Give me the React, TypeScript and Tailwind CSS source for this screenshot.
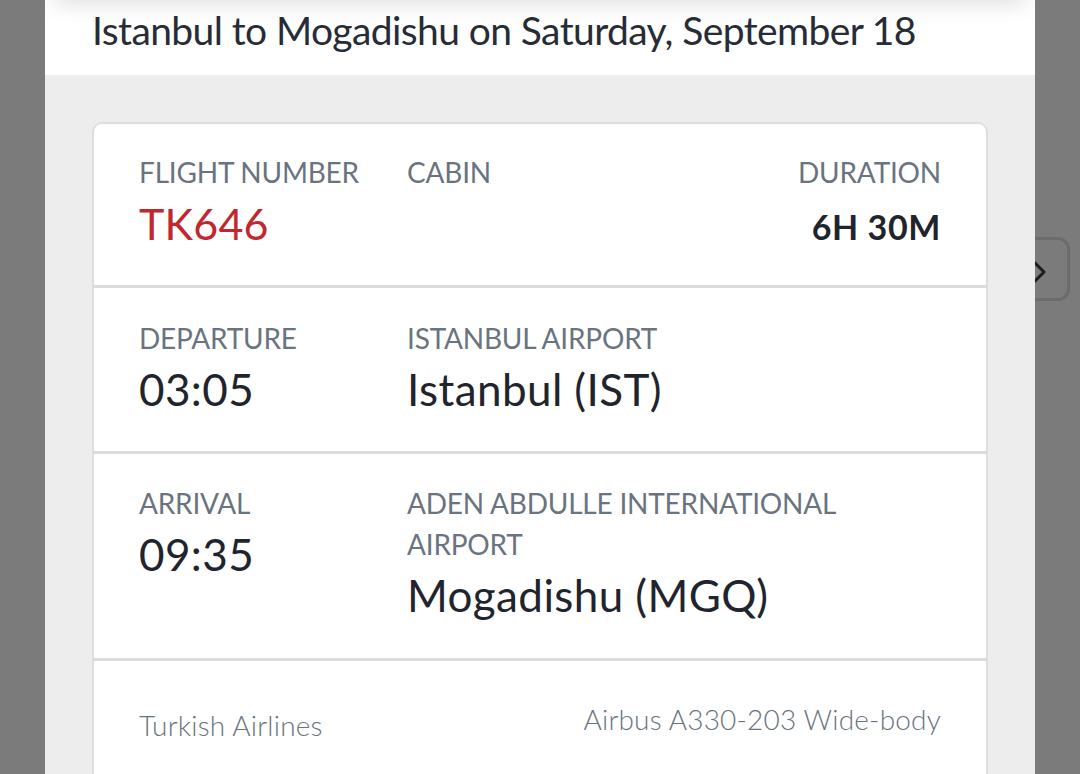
import React from "react";

const font = { fontFamily: "Lato, 'Noto Sans', sans-serif" };

function Label({ children }: { children: React.ReactNode }) {
  return <p className="text-[28px] leading-[41px] tracking-[-0.2px] uppercase text-[#6a7380]">{children}</p>;
}

export default function App() {
  return (
    <div className="relative h-[774px] w-[1080px] overflow-hidden bg-[#7b7b7b]" style={font}>
      {/* next arrow behind the sheet */}
      <div className="absolute left-[1000px] top-[237px] flex h-[64px] w-[70px] items-center justify-end rounded-xl border-[3px] border-[#6c6c6c] pr-[20px] pt-[6px]">
        <svg width="16" height="26" viewBox="0 0 16 26" fill="none">
          <polyline points="3,3 13,13 3,23" stroke="#1d1d1f" strokeWidth="3" strokeLinecap="round" strokeLinejoin="round" />
        </svg>
      </div>

      <div className="relative z-10 ml-[45px] h-full w-[990px] bg-[#ededed]">
        {/* header */}
        <div className="relative h-[75px] overflow-hidden bg-white px-[47px] pt-[6px]">
          <div className="absolute -top-[20px] left-[10px] right-[10px] h-[20px] bg-white shadow-[0_2px_22px_rgba(0,0,0,0.16)]" />
          <h1 className="text-[39px] leading-[48px] tracking-[-0.6px] text-[#272c36]">
            Istanbul to Mogadishu on Saturday, September 18
          </h1>
        </div>

        {/* body */}
        <div className="px-[47px] pt-[47px]">
          <div className="overflow-hidden rounded-[10px] border-2 border-[#dedede] bg-white">
            {/* flight */}
            <div className="flex border-b-[3px] border-[#dcdcdc] pb-[32px] pl-[45px] pr-[45px] pt-[28px]">
              <div className="w-[268px]">
                <Label>Flight Number</Label>
                <p className="mt-[5px] text-[43px] leading-[52px] tracking-[0.2px] text-[#c1282e]">TK646</p>
              </div>
              <div className="flex-1">
                <Label>Cabin</Label>
              </div>
              <div className="text-right">
                <Label>Duration</Label>
                <p className="mt-[8px] text-[34px] font-bold leading-[52px] tracking-[0.6px] text-[#1f242d]">6H 30M</p>
              </div>
            </div>

            {/* departure */}
            <div className="flex border-b-[3px] border-[#dcdcdc] pb-[36px] pl-[45px] pr-[45px] pt-[30px]">
              <div className="w-[268px]">
                <Label>Departure</Label>
                <p className="mt-1 text-[44px] leading-[52px] tracking-[0.4px] text-[#1f242d]">03:05</p>
              </div>
              <div className="flex-1">
                <Label>Istanbul Airport</Label>
                <p className="mt-1 text-[44px] leading-[52px] tracking-[0.4px] text-[#1f242d]">Istanbul (IST)</p>
              </div>
            </div>

            {/* arrival */}
            <div className="flex border-b-[3px] border-[#dcdcdc] pb-[37px] pl-[45px] pr-[45px] pt-[29px]">
              <div className="w-[268px]">
                <Label>Arrival</Label>
                <p className="mt-1 text-[44px] leading-[52px] tracking-[0.4px] text-[#1f242d]">09:35</p>
              </div>
              <div className="flex-1 pr-[60px]">
                <Label>Aden Abdulle International Airport</Label>
                <p className="mt-1 text-[44px] leading-[52px] tracking-[0.4px] text-[#1f242d]">Mogadishu (MGQ)</p>
              </div>
            </div>

            {/* carrier */}
            <div className="flex items-start justify-between pb-[40px] pl-[45px] pr-[45px] pt-[40px]">
              <p className="mt-[6px] text-[28px] font-light leading-[36px] tracking-[0.2px] text-[#6a7380]">
                Turkish Airlines
              </p>
              <p className="text-[28px] font-light leading-[36px] tracking-[0.2px] text-[#6a7380]">
                Airbus A330-203 Wide-body
              </p>
            </div>
          </div>
        </div>
      </div>
    </div>
  );
}
